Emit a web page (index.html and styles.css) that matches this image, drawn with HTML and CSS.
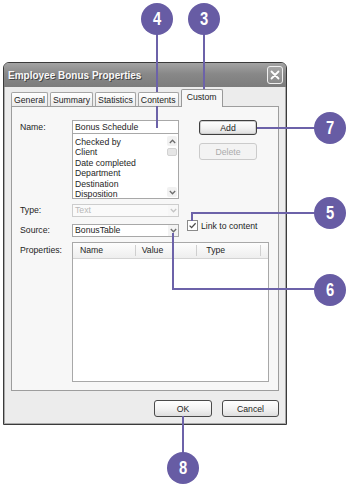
FILE: index.html
```html
<!DOCTYPE html>
<html>
<head>
<meta charset="utf-8">
<link rel="stylesheet" href="styles.css">
</head>
<body>
<div class="dialog">
  <div class="titlebar">
    <span class="title">Employee Bonus Properties</span>
    <span class="close"><svg width="10" height="10" viewBox="0 0 10 10"><path d="M1.5 1.5 L8.5 8.5 M8.5 1.5 L1.5 8.5" stroke="#fff" stroke-width="1.8" stroke-linecap="round"/></svg></span>
  </div>
  <div class="body">
    <div class="tabs">
      <div class="tab">General</div>
      <div class="tab">Summary</div>
      <div class="tab">Statistics</div>
      <div class="tab">Contents</div>
      <div class="tab active">Custom</div>
    </div>
    <div class="panel">
      <div class="top">
        <div class="form">
          <div class="row name-row">
            <div class="lbl lbl-name">Name:</div>
            <div class="field">
              <div class="input">Bonus Schedule</div>
              <div class="list">
                <div class="items">
                  <div>Checked by</div>
                  <div>Client</div>
                  <div>Date completed</div>
                  <div>Department</div>
                  <div>Destination</div>
                  <div>Disposition</div>
                </div>
                <div class="vscroll">
                  <span class="sbtn"><svg width="7" height="5" viewBox="0 0 7 5"><path d="M0.8 4 L3.5 1.2 L6.2 4" fill="none" stroke="#6d6d6d" stroke-width="1.3"/></svg></span>
                  <span class="thumb"></span>
                  <span class="sgap"></span>
                  <span class="sbtn"><svg width="7" height="5" viewBox="0 0 7 5"><path d="M0.8 1 L3.5 3.8 L6.2 1" fill="none" stroke="#6d6d6d" stroke-width="1.3"/></svg></span>
                </div>
              </div>
            </div>
          </div>
          <div class="row type-row">
            <div class="lbl">Type:</div>
            <div class="combo disabled">
              <span class="ctext">Text</span>
              <span class="carrow"><svg width="7" height="5" viewBox="0 0 7 5"><path d="M0.8 1 L3.5 3.8 L6.2 1" fill="none" stroke="#c4c4c4" stroke-width="1.3"/></svg></span>
            </div>
          </div>
          <div class="row source-row">
            <div class="lbl">Source:</div>
            <div class="combo">
              <span class="ctext">BonusTable</span>
              <span class="carrow"><svg width="7" height="5" viewBox="0 0 7 5"><path d="M0.8 1 L3.5 3.8 L6.2 1" fill="none" stroke="#6d6d6d" stroke-width="1.3"/></svg></span>
            </div>
            <div class="check">
              <span class="box"><svg width="9" height="9" viewBox="0 0 9 9"><path d="M1.6 4.6 L3.6 6.6 L7.6 2.2" fill="none" stroke="#4a4a4a" stroke-width="1.3"/></svg></span>
              <span>Link to content</span>
            </div>
          </div>
        </div>
        <div class="buttons">
          <div class="btn add">Add</div>
          <div class="btn del">Delete</div>
        </div>
      </div>
      <div class="row props-row">
        <div class="lbl lbl-props">Properties:</div>
        <div class="listview">
          <div class="lvhead">
            <div class="col c1">Name</div>
            <div class="col c2">Value</div>
            <div class="col c3">Type</div>
            <div class="col c4"></div>
          </div>
        </div>
      </div>
    </div>
    <div class="footer">
      <div class="btn ok">OK</div>
      <div class="btn cancel">Cancel</div>
    </div>
  </div>
</div>

<div class="callouts">
  <div class="ln v l4"></div>
  <div class="ln v l3"></div>
  <div class="ln h l7"></div>
  <div class="ln h l5h"></div>
  <div class="ln v l5v"></div>
  <div class="ln h l6h"></div>
  <div class="ln v l6v"></div>
  <div class="ln v l8"></div>
  <div class="badge b4"><span>4</span></div>
  <div class="badge b3"><span>3</span></div>
  <div class="badge b7"><span>7</span></div>
  <div class="badge b5"><span>5</span></div>
  <div class="badge b6"><span>6</span></div>
  <div class="badge b8"><span>8</span></div>
</div>
</body>
</html>
```

FILE: styles.css
```css
* { box-sizing: border-box; }
html, body { margin: 0; padding: 0; }
body {
  width: 350px;
  height: 490px;
  background: #fff;
  position: relative;
  overflow: hidden;
  font-family: "Liberation Sans", Arial, sans-serif;
  font-size: 8.7px;
  color: #1e1e1e;
}

.dialog {
  margin: 62px 0 0 3px;
  width: 284px;
  height: 363px;
  border: 1px solid #3a3a3a;
  border-radius: 6px 6px 0 0;
  background: #ececec;
  box-shadow: inset 1px 0 0 #a9a9a9, inset -1px 0 0 #a9a9a9, inset 0 -1px 0 #a9a9a9;
  display: flex;
  flex-direction: column;
}

.titlebar {
  height: 24px;
  display: flex;
  align-items: center;
  justify-content: space-between;
  padding: 0 3px 0 4px;
  background: linear-gradient(#a3a3a3, #888888 45%, #7c7c7c);
  border-radius: 5px 5px 0 0;
}
.title {
  font-weight: bold;
  font-size: 10px;
  color: #f8f8f8;
  text-shadow: 1px 1px 0 #444;
}
.close {
  width: 16px;
  height: 18px;
  border: 1px solid #f0f0f0;
  border-radius: 3px;
  background: linear-gradient(#a6a6a6, #8a8a8a);
  display: flex;
  align-items: center;
  justify-content: center;
}

.body {
  flex: 1;
  padding: 2px 7px 0;
  display: flex;
  flex-direction: column;
}

.tabs {
  display: flex;
  align-items: flex-end;
  gap: 2px;
  height: 17px;
  position: relative;
  z-index: 1;
}
.tab {
  height: 14px;
  padding: 0 2px;
  border: 1px solid #a5a5a5;
  border-bottom: none;
  border-radius: 2px 2px 0 0;
  background: linear-gradient(#ffffff, #ebebeb);
  display: flex;
  align-items: center;
}
.tab.active {
  height: 18px;
  margin-bottom: -1px;
  padding: 0 5px 3px;
  background: #f7f7f7;
  border-color: #999;
}

.panel {
  height: 285px;
  border: 1px solid #9d9d9d;
  background: #f7f7f7;
  padding: 13px 0 0 8px;
}

.top { display: flex; }
.form { width: 159px; flex-shrink: 0; display: flex; flex-direction: column; }
.row { display: flex; align-items: flex-start; }
.lbl { width: 52px; flex-shrink: 0; line-height: 13px; }
.lbl-name { line-height: 14px; }
.field { width: 107px; flex-shrink: 0; }

.input {
  height: 14px;
  border: 1px solid #a8a8a8;
  background: #fff;
  padding: 0 2px;
  line-height: 12px;
}
.list {
  height: 65px;
  border: 1px solid #a8a8a8;
  border-top: none;
  background: #fff;
  display: flex;
}
.items {
  flex: 1;
  padding: 3px 0 0 2px;
  line-height: 10.4px;
}
.vscroll {
  width: 11px;
  padding: 2px 1px 1px 0;
  display: flex;
  flex-direction: column;
  align-items: center;
}
.sbtn {
  width: 10px;
  height: 10px;
  background: #f1f1f1;
  border-radius: 2px;
  display: flex;
  align-items: center;
  justify-content: center;
}
.thumb {
  width: 10px;
  height: 8px;
  margin-top: 2px;
  background: #e6e6e6;
  border: 1px solid #d2d2d2;
  border-radius: 2px;
}
.sgap { flex: 1; }

.type-row { margin-top: 5px; }
.source-row { margin-top: 7px; }

.combo {
  width: 107px;
  flex-shrink: 0;
  height: 13px;
  border: 1px solid #a8a8a8;
  background: #fff;
  display: flex;
  align-items: center;
}
.ctext { flex: 1; padding-left: 2px; line-height: 11px; }
.carrow {
  width: 10px;
  height: 11px;
  display: flex;
  align-items: center;
  justify-content: center;
  background: #f3f3f3;
}
.combo.disabled { border-color: #cdcdcd; background: #fafafa; color: #b8b8b8; }
.combo.disabled .carrow { background: #f7f7f7; }

.check {
  flex-shrink: 0;
  white-space: nowrap;
  display: flex;
  align-items: center;
  gap: 3px;
  margin: -4px 0 0 8px;
}
.box {
  width: 11px;
  height: 11px;
  border: 1px solid #8a8a8a;
  background: #fff;
  display: flex;
  align-items: center;
  justify-content: center;
}

.buttons {
  margin-left: 20px;
  display: flex;
  flex-direction: column;
}
.btn {
  width: 58px;
  height: 15px;
  border: 1px solid #555;
  border-radius: 3px;
  background: linear-gradient(#ffffff, #f2f2f2 55%, #dedede);
  display: flex;
  align-items: center;
  justify-content: center;
}
.btn.add { border-color: #3f3f3f; box-shadow: inset 0 0 0 1px #cfcfcf; }
.btn.del {
  height: 17px;
  margin-top: 8px;
  border-color: #cbcbcb;
  color: #ababab;
  background: #f3f3f3;
}

.props-row { margin-top: 5px; }
.lbl-props { line-height: 16px; }
.listview {
  width: 197px;
  height: 140px;
  border: 1px solid #a8a8a8;
  background: #fff;
}
.lvhead {
  height: 16px;
  display: flex;
  background: linear-gradient(#fdfdfd, #eeeeee);
  border-bottom: 1px solid #d3d3d3;
}
.col {
  padding-left: 7px;
  border-right: 1px solid #cfcfcf;
  margin: 2px 0;
  line-height: 11px;
}
.c1 { width: 64px; }
.c2 { width: 63px; padding-left: 6px; }
.c3 { width: 65px; padding-left: 9px; }
.c4 { flex: 1; border-right: none; }

.footer {
  margin-top: 9px;
  display: flex;
  justify-content: flex-end;
  gap: 10px;
}
.btn.ok, .btn.cancel { height: 17px; border-color: #4a4a4a; }
.btn.cancel { width: 57px; }

.callouts {
  position: absolute;
  left: 0;
  top: 0;
  width: 350px;
  height: 490px;
  pointer-events: none;
}
.ln { position: absolute; background: #6c62a9; }
.ln.v { width: 2px; }
.ln.h { height: 2px; }
.l4 { left: 156px; top: 30px; height: 98px; }
.l3 { left: 203px; top: 30px; height: 59px; }
.l7 { left: 257px; top: 127px; width: 60px; }
.l5h { left: 191px; top: 212px; width: 126px; }
.l5v { left: 191px; top: 212px; height: 9px; }
.l6h { left: 172px; top: 288px; width: 145px; }
.l6v { left: 172px; top: 233px; height: 57px; }
.l8 { left: 182px; top: 416px; height: 40px; }

.badge {
  position: absolute;
  width: 32px;
  height: 32px;
  border-radius: 50%;
  background: #675ca4;
  color: #fff;
  display: flex;
  align-items: center;
  justify-content: center;
  font-family: "Liberation Sans", Arial, sans-serif;
  font-weight: bold;
  font-size: 18px;
}
.badge span { display: block; transform: scaleX(0.82); }
.b4 { left: 141px; top: 3px; }
.b3 { left: 188px; top: 3px; }
.b7 { left: 314px; top: 112px; }
.b5 { left: 314px; top: 197px; }
.b6 { left: 314px; top: 274px; }
.b8 { left: 167px; top: 452px; }
```
